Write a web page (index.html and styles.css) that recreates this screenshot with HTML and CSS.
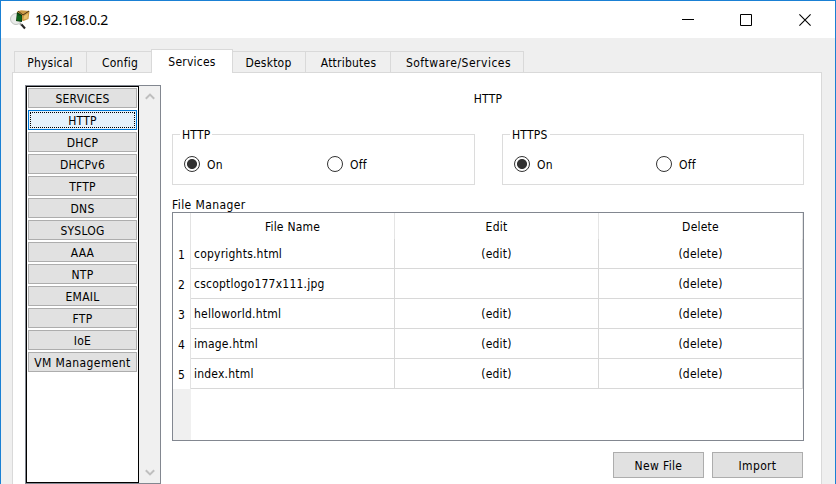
FILE: index.html
```html
<!DOCTYPE html>
<html lang="en">
<head>
<meta charset="utf-8">
<title>192.168.0.2</title>
<link rel="stylesheet" href="styles.css">
</head>
<body>
<div class="window">
  <header class="titlebar">
    <svg class="app-icon" width="20" height="20" viewBox="0 0 20 20">
      <path d="M7 1.5l4-1.2 8.500 .7-1 8-5 2-7-2z" fill="#c99a45"/>
      <path d="M8 1l5 4 6-4" fill="none" stroke="#4b3516"/>
      <path d="M14 6l4-2.500-.5 5-4 1z" fill="#e8c16c"/>
      <circle cx="6" cy="9" r="5.500" fill="#e9ebe9" stroke="#c0c4c1"/>
      <path d="M7 2l5 3v7l-6-1z" fill="#063b0c"/>
      <path d="M8 4v7M10 5v6M7 7h5M7 9h5" stroke="#168227" stroke-width=".7"/>
      <path d="M10 13.500l1.500 1.500" stroke="#999" stroke-width="2"/>
      <path d="M11.500 14.500l3.500 4" stroke="#252525" stroke-width="2"/>
    </svg>
    <span class="title">192.168.0.2</span>
    <div class="controls">
      <svg width="12" height="12"><path d="M0 5.5h12" stroke="#000"/></svg>
      <svg width="12" height="12"><path d="M.5.5h11v11H.5z" fill="none" stroke="#000"/></svg>
      <svg width="12" height="12"><path d="M.4.4l11.2 11.2M11.6.4L.4 11.6" stroke="#000" stroke-width="1.1"/></svg>
    </div>
  </header>
  <nav class="tabs">
    <div class="tab physical">Physical</div>
    <div class="tab config">Config</div>
    <div class="tab services active">Services</div>
    <div class="tab desktop">Desktop</div>
    <div class="tab attributes">Attributes</div>
    <div class="tab software">Software/Services</div>
  </nav>
  <main class="pane">
    <aside class="sidebar">
      <div class="service-list">
        <button>SERVICES</button>
        <button class="selected">HTTP</button>
        <button>DHCP</button>
        <button>DHCPv6</button>
        <button>TFTP</button>
        <button>DNS</button>
        <button>SYSLOG</button>
        <button>AAA</button>
        <button>NTP</button>
        <button>EMAIL</button>
        <button>FTP</button>
        <button>IoE</button>
        <button class="wide">VM Management</button>
      </div>
      <div class="scrollbar">
        <svg width="10" height="7"><path d="M.8 5.8L5 1.6l4.2 4.2" fill="none" stroke="#bfbfbf" stroke-width="2"/></svg>
        <svg width="10" height="7"><path d="M.8 1.2L5 5.4l4.2-4.2" fill="none" stroke="#bfbfbf" stroke-width="2"/></svg>
      </div>
    </aside>
    <section class="content">
      <h1>HTTP</h1>
      <div class="groups">
        <div class="group http">
          <span class="legend">HTTP</span>
          <label class="option"><i class="radio checked"></i><span>On</span></label>
          <label class="option"><i class="radio"></i><span>Off</span></label>
        </div>
        <div class="group https">
          <span class="legend">HTTPS</span>
          <label class="option"><i class="radio checked"></i><span>On</span></label>
          <label class="option"><i class="radio"></i><span>Off</span></label>
        </div>
      </div>
      <h2>File Manager</h2>
      <div class="table">
        <div class="row head"><span class="num"></span><span class="cell">File Name</span><span class="cell">Edit</span><span class="cell">Delete</span></div>
        <div class="row"><span class="num">1</span><span class="cell name">copyrights.html</span><span class="cell">(edit)</span><span class="cell">(delete)</span></div>
        <div class="row"><span class="num">2</span><span class="cell name">cscoptlogo177x111.jpg</span><span class="cell"></span><span class="cell">(delete)</span></div>
        <div class="row"><span class="num">3</span><span class="cell name">helloworld.html</span><span class="cell">(edit)</span><span class="cell">(delete)</span></div>
        <div class="row"><span class="num">4</span><span class="cell name">image.html</span><span class="cell">(edit)</span><span class="cell">(delete)</span></div>
        <div class="row"><span class="num">5</span><span class="cell name">index.html</span><span class="cell">(edit)</span><span class="cell">(delete)</span></div>
        <div class="gutter"></div>
      </div>
      <div class="actions"><button>New File</button><button>Import</button></div>
    </section>
  </main>
</div>
</body>
</html>
```
FILE: styles.css
```css
* { box-sizing: border-box; }
body {
  margin: 0;
  overflow: hidden;
  font: 12px/16px "DejaVu Sans Condensed", "DejaVu Sans", sans-serif;
  font-stretch: condensed;
  letter-spacing: 0.22px;
  color: #000;
}
svg { display: block; }
button {
  font: inherit;
  letter-spacing: inherit;
  color: inherit;
  padding: 0;
  background: #e1e1e1;
  border: 1px solid #adadad;
  border-radius: 0;
}
.window {
  width: 836px;
  height: 484px;
  background: #efefef;
  border: 1px solid #1a80d4;
  border-bottom: 0;
  display: flex;
  flex-direction: column;
}
.titlebar {
  flex: none;
  height: 37px;
  background: #fff;
  display: flex;
  align-items: center;
  padding: 0 24px 0 9px;
}
.title {
  margin-left: 5px;
  font: 14px/18px "Noto Sans", sans-serif;
  letter-spacing: -0.2px;
}
.controls { margin-left: auto; display: flex; gap: 47px; }
.controls svg:first-child { margin-right: -1px; }
.tabs {
  flex: none;
  height: 34px;
  padding-left: 13px;
  display: flex;
  align-items: flex-end;
}
.tab {
  height: 21px;
  border: 1px solid #d9d9d9;
  border-right: 0;
  border-bottom: 0;
  line-height: 22px;
  text-align: center;
}
.physical { width: 72px; padding-right: 1px; }
.config { width: 66px; padding-left: 1px; }
.tab.desktop { width: 72px; border-left: 0; padding-right: 1px; }
.attributes { width: 85px; padding-left: 1px; }
.software {
  width: 134px;
  border-right: 1px solid #d9d9d9;
  padding-left: 3px;
  letter-spacing: 0.5px;
}
.tab.active {
  height: 24px;
  margin: 0 0 -1px -1px;
  width: 82px;
  background: #fff;
  border-right: 1px solid #d9d9d9;
  line-height: 24px;
  z-index: 1;
}
.pane {
  flex: 1;
  margin: 0 13px 0 11px;
  background: #fff;
  border: 1px solid #d9d9d9;
  border-bottom: 0;
  display: flex;
  padding: 12px 17px 0 12px;
}
.sidebar {
  width: 136px;
  height: 399px;
  border: 1px solid #828790;
  display: flex;
}
.service-list {
  width: 113px;
  border: 1px solid #000;
  padding: 1px;
  display: flex;
  flex-direction: column;
  gap: 2px;
}
.service-list button { height: 20px; line-height: 18px; padding-top: 1px; }
.service-list .wide { letter-spacing: 0.4px; }
.service-list .selected {
  background: #e5f1fb;
  border-color: #0078d7;
  outline: 1px dotted #000;
  outline-offset: -3px;
}
.scrollbar {
  flex: 1;
  background: #f0f0f0;
  display: flex;
  flex-direction: column;
  align-items: center;
  justify-content: space-between;
  padding: 7px 0;
}
.content { width: 632px; margin-left: 11px; }
h1, h2 { font: inherit; margin: 0; }
h1 { text-align: center; margin-top: 6px; height: 43px; }
.groups { display: flex; justify-content: space-between; }
.group {
  height: 51px;
  border: 1px solid #dcdcdc;
  display: flex;
  position: relative;
  padding: 21px 0 0 11px;
}
.http { width: 303px; }
.https { width: 302px; }
.legend {
  position: absolute;
  left: 7px;
  top: -8px;
  padding: 0 2px;
  background: #fff;
}
.option { display: flex; width: 143px; height: 16px; }
.option span { padding-top: 1px; }
.https .option { width: 142px; }
.radio {
  width: 16px;
  height: 16px;
  border: 1px solid #333;
  border-radius: 50%;
  margin-right: 7px;
}
.checked { background: radial-gradient(circle, #333 4.6px, #fff 5.4px); }
h2 { margin-top: 12px; height: 15px; letter-spacing: 0.4px; }
.table {
  height: 229px;
  border: 1px solid #828790;
  display: flex;
  flex-direction: column;
}
.row {
  height: 30px;
  display: grid;
  grid-template-columns: 18px 204px 204px 204px;
  grid-template-rows: 100%;
  line-height: 30px;
  text-align: center;
}
.row.head { height: 26px; line-height: 28px; }
.num { border-right: 1px solid #e3e3e3; }
.row:not(.head) .num { line-height: 32px; }
.cell { border-right: 1px solid #d8d8d8; border-bottom: 1px solid #d8d8d8; }
.head .cell { border-right-color: #e5e5e5; border-bottom: 0; }
.cell.name { text-align: left; padding-left: 3px; }
.gutter { width: 18px; flex: 1; background: #f0f0f0; }
.actions {
  display: flex;
  justify-content: flex-end;
  gap: 8px;
  padding: 11px 1px 0 0;
}
.actions button { width: 91px; height: 26px; padding-top: 1px; letter-spacing: 0.35px; }
```
